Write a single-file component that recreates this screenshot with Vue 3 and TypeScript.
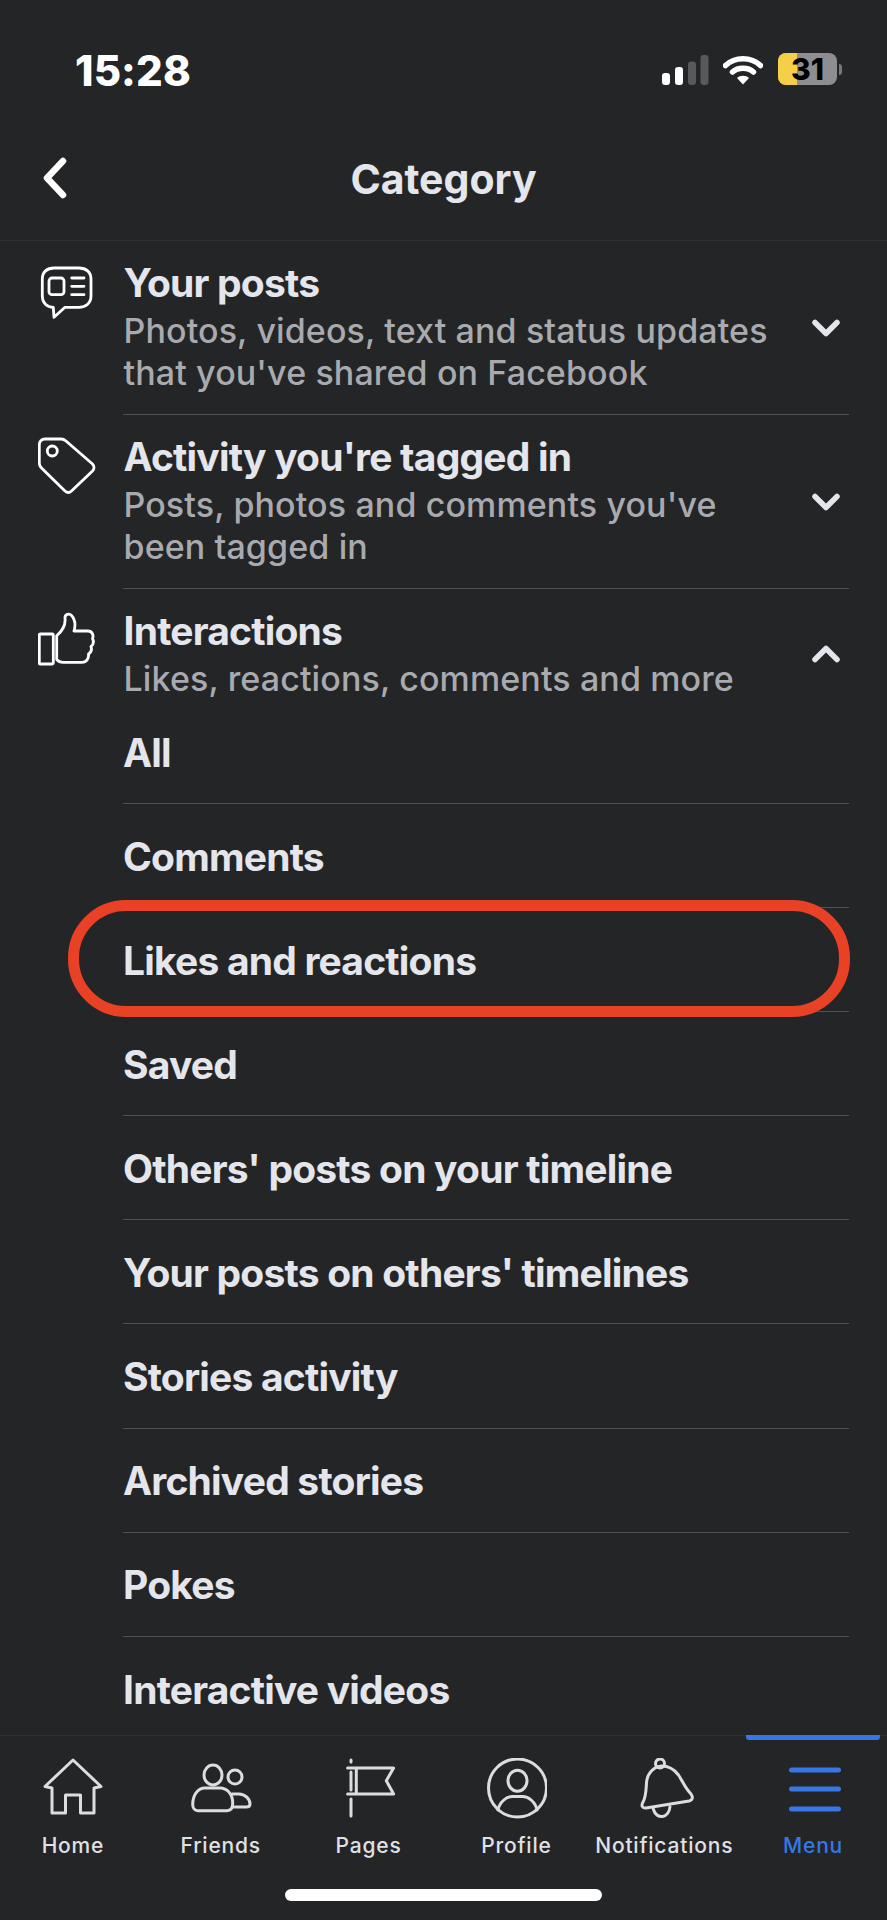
<script setup lang="ts">
const categories = [
  { title: 'Your posts', desc: ['Photos, videos, text and status updates', "that you've shared on Facebook"], icon: 'post' },
  { title: "Activity you're tagged in", desc: ["Posts, photos and comments you've", 'been tagged in'], icon: 'tag' },
];

const subItems = [
  'All',
  'Comments',
  'Likes and reactions',
  'Saved',
  "Others' posts on your timeline",
  "Your posts on others' timelines",
  'Stories activity',
  'Archived stories',
  'Pokes',
  'Interactive videos',
];

const tabs = ['Home', 'Friends', 'Pages', 'Profile', 'Notifications', 'Menu'];
</script>

<template>
  <div class="phone">
    <div class="status">
      <span class="time">15:28</span>
      <div class="status-icons">
        <svg class="signal" width="47" height="30" viewBox="0 0 47 30">
          <rect x="0" y="18" width="8" height="12" rx="3" fill="#fff" />
          <rect x="13" y="12" width="8" height="18" rx="3" fill="#fff" />
          <rect x="26" y="6.500" width="8" height="23.500" rx="3" fill="#58595b" />
          <rect x="38.500" y="0" width="8" height="30" rx="3" fill="#58595b" />
        </svg>
        <svg class="wifi" width="40" height="30" viewBox="0 0 40 30">
          <path d="M2.500 10.500C12 1.500 28 1.500 37.500 10.500" fill="none" stroke="#fff" stroke-width="5.500" stroke-linecap="round" />
          <path d="M9.500 17C15 12 25 12 30.500 17" fill="none" stroke="#fff" stroke-width="5.500" stroke-linecap="round" />
          <path d="M14 23 C17 20 23 20 26 23 L20 29.500Z" fill="#fff" />
        </svg>
        <div class="battery">
          <div class="battery-body">
            <div class="battery-fill"></div>
            <span>31</span>
          </div>
          <div class="battery-nub"></div>
        </div>
      </div>
    </div>

    <div class="header">
      <svg class="back" width="28" height="42" viewBox="0 0 28 42">
        <path d="M23 4 7 21l16 17" fill="none" stroke="#fff" stroke-width="6.500" stroke-linecap="round" stroke-linejoin="round" />
      </svg>
      <h1>Category</h1>
    </div>

    <div class="list">
      <div v-for="cat in categories" :key="cat.title" class="row">
        <svg class="cat-icon" viewBox="0 0 58 58">
          <g v-if="cat.icon === 'post'" fill="none" stroke="#fff" stroke-width="2.800" stroke-linejoin="round" stroke-linecap="round">
            <path d="M16 5H41C48 5 53 9 53 16V33C53 40 48 44.300 41 44.300H27L16 54.300 15.300 44.300C9 44.300 4.300 40 4.300 33V16C4.300 9 9 5 16 5Z" />
            <rect x="11" y="15" width="15" height="16.700" rx="3" />
            <path d="M33.700 15H46M33.700 23.300H46M33.700 31.700H46" />
          </g>
          <g v-else fill="none" stroke="#fff" stroke-width="2.800" stroke-linejoin="round">
            <path d="M7 2H23C25 2 26.500 2.700 28 4L54.500 27C56.500 29 56.500 32 54.500 34L33.500 54C31.500 55.800 29 55.800 27 54L3.500 31C2 29.500 1.300 28 1.300 26V8C1.300 4.500 3.500 2 7 2Z" />
            <circle cx="14.300" cy="14" r="5" />
          </g>
        </svg>
        <div class="row-text">
          <div class="title">{{ cat.title }}</div>
          <div v-for="line in cat.desc" :key="line" class="desc">{{ line }}</div>
        </div>
        <svg class="chevron" width="30" height="20" viewBox="0 0 30 20">
          <path d="M4 4.500 15 15.500 26 4.500" fill="none" stroke="#e4e6eb" stroke-width="5.500" stroke-linecap="round" stroke-linejoin="round" />
        </svg>
      </div>

      <div class="row row-open">
        <svg class="cat-icon" viewBox="0 0 58 58">
          <g fill="none" stroke="#fff" stroke-width="2.800" stroke-linejoin="round">
            <rect x="1.300" y="23" width="14" height="30" rx="1" />
            <path d="M18.700 24.700C23 21 28 15 27 7C26.800 3.500 31 1.800 33.500 4.500C37.500 9 37.500 15 36 20H50C54 20 56 24 54.500 27.500C56 30.500 55.500 33.500 53 35.500C54 38.500 53 41.500 50.500 43C51 47.500 48.500 51.300 44 51.300H25C22 51.300 20 50 18.700 48.500Z" />
          </g>
        </svg>
        <div class="row-text">
          <div class="title">Interactions</div>
          <div class="desc">Likes, reactions, comments and more</div>
        </div>
        <svg class="chevron" width="30" height="20" viewBox="0 0 30 20">
          <path d="M4 15.500 15 4.500 26 15.500" fill="none" stroke="#e4e6eb" stroke-width="5.500" stroke-linecap="round" stroke-linejoin="round" />
        </svg>
      </div>

      <div class="sub-list">
        <div v-for="item in subItems" :key="item" class="sub-item">
          <span>{{ item }}</span>
          <div v-if="item === 'Likes and reactions'" class="highlight"></div>
        </div>
      </div>
    </div>

    <div class="tabs">
      <div v-for="tab in tabs" :key="tab" class="tab" :class="{ active: tab === 'Menu' }">
        <svg class="tab-icon" width="62" height="62" viewBox="0 0 62 62">
          <g fill="none" stroke="#dcdde1" stroke-width="3" stroke-linejoin="round" stroke-linecap="round">
            <path v-if="tab === 'Home'" d="M31 2 3 28.500 10 30V55H23.500V37H38.500V55H52V30L59 28.500Z" />
            <template v-else-if="tab === 'Friends'">
              <ellipse cx="23" cy="17" rx="9" ry="10" />
              <circle cx="45" cy="19" r="7" />
              <path d="M15 30H30C37 30 42.700 36 42.700 45C42.700 50 41 52.700 37 52.700H8C4.500 52.700 2.700 50 2.700 46.500C2.700 37 8 30 15 30Z" />
              <path d="M42 36H49C55 36 60 41 60 46C60 48 58 49 56 49H43" />
            </template>
            <template v-else-if="tab === 'Pages'">
              <path d="M13 2V4M13 41V58" />
              <path d="M9.600 10H55.600L48.300 22.700 55.600 36H9.600M18.300 10V36M13 14V32" />
            </template>
            <g v-else-if="tab === 'Profile'" transform="translate(1.500 0)">
              <circle cx="31" cy="30" r="29" />
              <ellipse cx="31" cy="22.700" rx="9.500" ry="10.500" />
              <path d="M11.500 52C13 44 20 38.500 26 38.500H36C42 38.500 49 44 50.500 52" />
            </g>
            <template v-else-if="tab === 'Notifications'">
              <circle cx="27" cy="5.500" r="4.500" />
              <path d="M28.700 8C21 8.500 14 15 13.500 25C13 33 13 39 10 44C8 47.500 9 50.500 13 50L56 43C60 42 60 39 58 36C52 30 50 24 45.500 17C41 11 35 8 28.700 8Z" />
              <path d="M20.300 51C22 57 26 59 29.500 58.500C33.500 58 36.500 54 37 48.700" />
            </template>
            <path v-else d="M9.500 12H56.500M9.500 31H56.500M9.500 51H56.500" stroke="#3578e5" stroke-width="5" />
          </g>
        </svg>
        <span class="tab-label">{{ tab }}</span>
        <div v-if="tab === 'Menu'" class="tab-line"></div>
      </div>
    </div>
    <div class="home-indicator"></div>
  </div>
</template>

<style scoped>
.phone { width: 887px; height: 1920px; background: #242527; display: flex; flex-direction: column; position: relative; overflow: hidden; font-family: Inter, "Liberation Sans", sans-serif; color: #e4e6eb; }

.status { height: 140px; flex: none; display: flex; align-items: flex-start; justify-content: space-between; box-sizing: border-box; padding: 48px 45px 0 75px; }
.time { font-size: 42px; font-weight: 800; line-height: 46px; color: #fff; letter-spacing: .1px; }
.status-icons { display: flex; align-items: flex-start; margin-top: 5px; }
.signal { margin-top: 2px; }
.wifi { margin-left: 14px; margin-top: 2px; }
.battery { display: flex; align-items: center; margin-left: 15px; }
.battery-body { width: 59px; height: 32px; border-radius: 8px; background: #8e8e90; position: relative; display: flex; align-items: center; justify-content: center; }
.battery-fill { position: absolute; left: 0; top: 0; bottom: 0; width: 19px; background: #f5cf47; border-radius: 8px 0 0 8px; }
.battery-body span { position: relative; font-size: 30px; line-height: 32px; font-weight: 800; color: #000; }
.battery-nub { width: 3px; height: 11px; margin-left: 2px; background: #77787a; border-radius: 0 3px 3px 0; }

.header { height: 101px; flex: none; box-sizing: border-box; border-bottom: 1px solid #2f3032; position: relative; display: flex; align-items: center; justify-content: center; }
.header h1 { margin: 0; font-size: 41px; line-height: 46px; font-weight: 700; color: #e4e6eb; position: relative; top: -11px; }
.back { position: absolute; left: 40px; top: 17px; }

.list { flex: 1; min-height: 0; }
.row { height: 174px; box-sizing: border-box; margin-right: 38px; padding: 19px 0 0 38px; display: flex; align-items: flex-start; position: relative; }
.row::after { content: ""; position: absolute; left: 123px; right: 0; bottom: 0; height: 1px; background: #505154; }
.row-open { height: 129px; }
.row-open::after { display: none; }
.cat-icon { width: 58px; height: 58px; flex: none; margin-top: 3px; }
.row-text { margin-left: 27.500px; flex: 1; }
.title { font-size: 39px; line-height: 46px; font-weight: 650; color: #e4e6eb; letter-spacing: -.8px; }
.desc { font-size: 34px; line-height: 42px; font-weight: 500; color: #a9aaae; letter-spacing: .12px; }
.title + .desc { margin-top: 4px; }
.chevron { position: absolute; right: 8px; top: 77px; }
.row-open .chevron { top: 55px; }

.sub-list { margin: 0 38px 0 123px; }
.sub-item { height: 104.100px; box-sizing: border-box; border-bottom: 1px solid #505154; padding-top: 1px; display: flex; align-items: center; font-size: 39px; font-weight: 650; color: #e4e6eb; letter-spacing: -.8px; position: relative; }
.sub-item:first-child { height: 86px; padding-top: 0; padding-bottom: 17px; }
.sub-item:last-child { border-bottom: 0; }
.highlight { position: absolute; left: -55px; right: -1px; top: -8px; height: 117px; box-sizing: border-box; border: 11px solid #e94125; border-radius: 58px; }

.tabs { position: absolute; left: 0; right: 0; bottom: 0; height: 185px; background: #242527; border-top: 1px solid #2f3032; display: grid; grid-template-columns: repeat(6, 1fr); box-sizing: border-box; }
.tab { display: flex; flex-direction: column; align-items: center; position: relative; padding: 22px 2px 0 0; }
.tab.active { padding-right: 0; }
.tab-icon { flex: none; }
.tab-label { font-size: 21px; line-height: 26px; margin-top: 13px; color: #e0e1e5; letter-spacing: .8px; font-weight: 500; white-space: nowrap; }
.tab.active .tab-label { color: #3578e5; }
.tab-line { position: absolute; left: 7px; right: 7px; top: -1px; height: 5px; background: #3578e5; border-radius: 0 0 3px 3px; }
.home-indicator { position: absolute; left: 285px; bottom: 19px; width: 317px; height: 12px; border-radius: 6px; background: #fff; }
</style>
